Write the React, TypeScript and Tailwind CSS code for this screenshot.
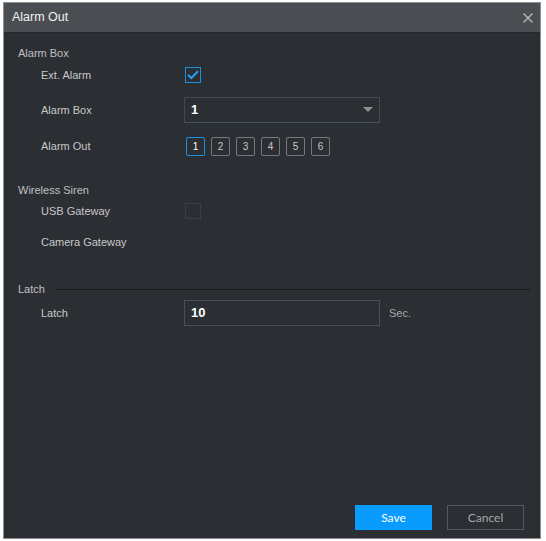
import React from "react";

const font = { fontFamily: '"Liberation Sans", Arial, sans-serif' };

function Row({ label, children, h }: { label: string; children?: React.ReactNode; h: string }) {
  return (
    <div className={`flex items-center ${h}`}>
      <div className="w-[166px] shrink-0 pl-[23px] text-[11px] text-[#c8c8c8]">{label}</div>
      {children}
    </div>
  );
}

export default function App() {
  return (
    <div className="w-[546px] h-[541px] bg-white relative" style={font}>
      <div className="absolute left-[3px] top-[2px] w-[538px] h-[537px] bg-[#2b2e33] border border-[#8c8e91] flex flex-col">
        <div className="h-[30px] bg-[#4a4d52] border-b border-[#23262a] flex items-center justify-between pl-[8px] pr-[6px]">
          <span className="text-[12.5px] text-[#f0f0f0]">Alarm Out</span>
          <svg width="12" height="12" viewBox="0 0 12 12">
            <path d="M1.5 1.5 L10.5 10.5 M10.5 1.5 L1.5 10.5" stroke="#b8b9bb" strokeWidth="1.4" />
          </svg>
        </div>
        <div className="flex-1 flex flex-col pl-[14px] pr-[6px]">
          <div className="mt-[12px] text-[11px] text-[#c0c0c0] h-[16px] flex items-center">Alarm Box</div>
          <Row label="Ext. Alarm" h="h-[26px] mt-[1px]">
            <div className="w-[16px] h-[16px] ml-[1px] border border-[#1b8fe0] flex items-center justify-center">
              <svg width="12" height="10" viewBox="0 0 12 10">
                <path d="M1 4.8 L4.3 8 L11 1.2" stroke="#2a9df4" strokeWidth="2" fill="none" />
              </svg>
            </div>
          </Row>
          <Row label="Alarm Box" h="h-[26px] mt-[9px]">
            <div className="w-[196px] h-[26px] border border-[#44474c] border-b-[#3f5566] flex items-center justify-between px-[6px]">
              <span className="text-[13px] font-bold text-white">1</span>
              <svg width="10" height="6" viewBox="0 0 10 6">
                <path d="M0 0 L10 0 L5 5 Z" fill="#8e9094" />
              </svg>
            </div>
          </Row>
          <Row label="Alarm Out" h="h-[26px] mt-[10px]">
            <div className="flex gap-[6px] pl-[2px]">
              {["1", "2", "3", "4", "5", "6"].map((n, i) => (
                <div
                  key={n}
                  className={`w-[19px] h-[19px] rounded-[2px] flex items-center justify-center text-[10px] ${
                    i === 0 ? "border border-[#1b8fe0] text-white" : "border border-[#75787c] text-[#c8c8c8]"
                  }`}
                >
                  {n}
                </div>
              ))}
            </div>
          </Row>
          <div className="mt-[23px] text-[11px] text-[#c0c0c0] h-[16px] flex items-center">Wireless Siren</div>
          <Row label="USB Gateway" h="h-[26px] mt-[0px]">
            <div className="w-[16px] h-[16px] ml-[1px] border border-[#3c3f44]" />
          </Row>
          <Row label="Camera Gateway" h="h-[26px] mt-[5px]" />
          <div className="mt-[26px] flex items-center h-[16px]">
            <span className="text-[11px] text-[#c0c0c0]">Latch</span>
            <div className="flex-1 h-px bg-[#15171a] ml-[10px] mr-[4px]" />
          </div>
          <Row label="Latch" h="h-[26px] mt-[3px]">
            <div className="w-[196px] h-[26px] border border-[#4a4d52] flex items-center px-[6px]">
              <span className="text-[13px] font-bold text-white">10</span>
            </div>
            <span className="ml-[9px] text-[11px] text-[#a8a8a8]">Sec.</span>
          </Row>
          <div className="flex-1" />
          <div className="flex justify-end gap-[15px] pr-[10px] mb-[8px]">
            <div className="w-[77px] h-[25px] bg-[#0a9bff] flex items-center justify-center text-[12px] text-white" style={{ fontFamily: 'Lato, sans-serif' }}>
              Save
            </div>
            <div className="w-[77px] h-[25px] border border-[#55585d] flex items-center justify-center text-[12px] text-[#a8a8a8]" style={{ fontFamily: 'Lato, sans-serif' }}>
              Cancel
            </div>
          </div>
        </div>
      </div>
    </div>
  );
}
